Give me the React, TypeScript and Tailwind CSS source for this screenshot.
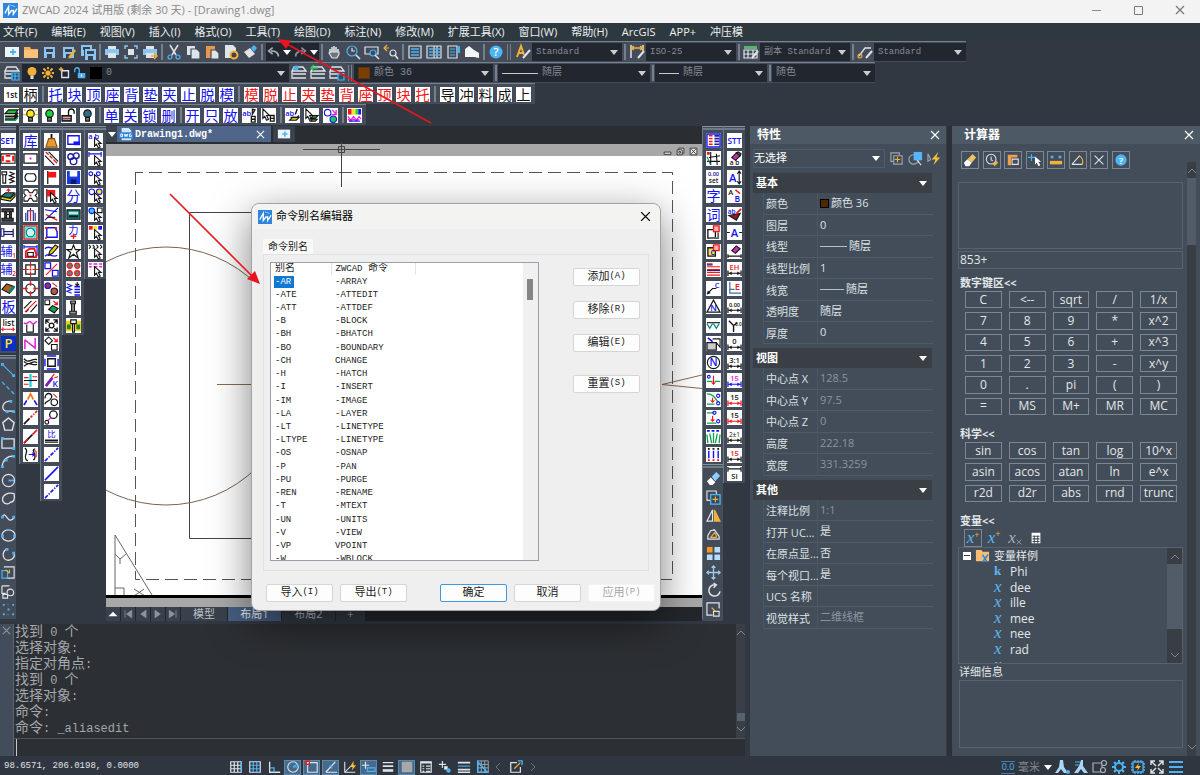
import type { ReactNode } from "react";
import clsx from "clsx";

const SANS = "[font-family:'Open_Sans','Noto_Sans_CJK_SC',sans-serif]";
const MONO = "[font-family:'Liberation_Mono','Noto_Sans_CJK_SC',monospace]";

// d, stroke, fill, stroke width
type Shape = [string, string?, string?, number?];
// text, x, y, size, colour
type Label = [string, number, number, number, string];
type Icon = { name: string; s?: Shape[]; t?: Label[]; bg?: string };

const B = "#1414f0";
const R = "#f01818";
const K = "#151515";
const L = "#dfe4e8";
const S = "#4cb4f5";
const O = "#efb13c";
const G = "#12a04a";
const M = "#e01ee0";
const T = "#0b8080";

const circle = (x: number, y: number, r: number) =>
  `M${x - r} ${y}a${r} ${r} 0 1 0 ${2 * r} 0a${r} ${r} 0 1 0 ${-2 * r} 0z`;

const glyph = (char: string, color = B): Icon => ({ name: char, t: [[char, 8, 13.5, 15, color]] });

const cursor: Shape = ["M7 5v9l2-2 2 4 2-1-2-4h3z", K, "#fff"];

const Drawing = ({ icon, size = "size-[16px]" }: { icon: Icon; size?: string }) => (
  <svg viewBox="0 0 16 16" className={clsx("shrink-0 overflow-visible", size)} aria-hidden="true">
    {icon.s?.map(([d, stroke = "none", fill = "none", width = 1.2], i) => (
      <path key={i} d={d} stroke={stroke} fill={fill} strokeWidth={width} />
    ))}
    {icon.t?.map(([text, x, y, fontSize, fill], i) => (
      <text
        key={i}
        x={x}
        y={y}
        fontSize={fontSize}
        fontWeight={/^[\x20-\x7e]+$/.test(text) ? 600 : 400}
        fill={fill}
        textAnchor="middle"
        className={SANS}
      >
        {text}
      </text>
    ))}
  </svg>
);

const Tile = ({ icon }: { icon: Icon }) => (
  <button
    aria-label={icon.name}
    className={clsx("flex size-[15px] shrink-0 items-center justify-center", icon.bg ?? "bg-white")}
  >
    <Drawing icon={icon} size="size-[15px]" />
  </button>
);

const Tool = ({ icon }: { icon: Icon }) => (
  <button aria-label={icon.name} className="flex w-[19px] shrink-0 items-center justify-center">
    <Drawing icon={icon} />
  </button>
);

const Sep = ({ wide = false }: { wide?: boolean }) => (
  <span className={clsx("flex shrink-0 items-center justify-center self-stretch", wide ? "w-2" : "w-[5px]")}>
    <span className={clsx("h-4 border-[#75808f]", wide ? "w-1 border-x" : "w-0.5 bg-[#75808f]")} />
  </span>
);

const Triangle = ({ className = "fill-[#c9ced3]" }: { className?: string }) => (
  <svg viewBox="0 0 8 5" className={clsx("h-[5px] w-2 shrink-0", className)} aria-hidden="true">
    <path d="M0 0h8l-4 5z" />
  </svg>
);

const Cross = ({ className }: { className: string }) => (
  <svg viewBox="0 0 10 10" className={className} fill="none" strokeWidth="1.2" aria-hidden="true">
    <path d="M1 1l8 8M9 1l-8 8" />
  </svg>
);

type ComboProps = { label: string; value: string; className: string; text?: string; children?: ReactNode };

const Combo = ({ label, value, className, text = "text-[10px]", children }: ComboProps) => (
  <span className={clsx("flex h-[18px] shrink-0 items-center gap-1 bg-[#22262f] px-1", className)}>
    {children}
    <select aria-label={label} className={clsx("min-w-0 flex-1 appearance-none bg-transparent leading-4 text-[#848b94] outline-none", text, MONO)}>
      <option>{value}</option>
    </select>
    <Triangle />
  </span>
);

const logo: Icon = {
  name: "ZWCAD",
  s: [
    ["M0 0h16v16H0z", "none", "#2f84dd"],
    ["M2 11L6 4v8l3-4h2v4l4-6", "#fff", "none", 1.5],
    ["M8 2l5 2", "#9fd0ff", "none", 1],
  ],
};

/* ---------- top toolbars ---------- */
const disk = (x: number, y: number): Shape[] => [
  [`M${x} ${y}h11v11h-11z`, "none", "#8cc5f2"],
  [`M${x + 2} ${y + 2}h7v3h-7z`, "none", "#37424f"],
  [`M${x + 3} ${y + 7}h5v4h-5z`, "none", "#37424f"],
];
const printer: Shape[] = [
  ["M4 2h8v3H4z", "none", L],
  ["M1 5h14v6H1z", "none", "#8cc5f2"],
  ["M4 9h8v5H4z", "none", L],
];
const pages: Shape[] = [
  ["M2 2h8v9H2z", "none", L],
  ["M6 5h6l3 3v7H6z", "#424c58", L],
];

const fileTools: Icon[] = [
  { name: "新建", s: [["M1 3h14v10H1z", "none", "#eef3f7"], ["M9 5v6M6 8h6", S, "none", 1.8]] },
  { name: "打开", s: [["M1 3h6l1 2h7v9H1z", "none", "#f2ae5b"], ["M1 6h14v8H1z", "none", "#ffc27b"]] },
  { name: "保存", s: disk(2, 3) },
  { name: "另存为", s: [...disk(2, 3), ["M8 14l6-8", O, "none", 2.5]] },
  { name: "全部保存", s: [...disk(1, 1), ["M4 5h12v11H4z", "none", "#37424f"], ...disk(5, 5)] },
];
const printTools: Icon[] = [
  { name: "打印", s: printer },
  { name: "预览", s: [["M2 5V2h3M11 2h3v3M14 11v3h-3M5 14H2v-3", "#8cc5f2", "none", 1.5], ["M5 5h6v6H5z", "none", L]] },
  { name: "发布", s: [...printer, ["M9 12h6M12 9l3 3-3 3", O, "none", 1.5]] },
];
const editTools: Icon[] = [
  { name: "剪切", s: [["M4 1l6 10M12 1L6 11", L, "none", 1.5], [circle(4, 13, 2), S], [circle(12, 13, 2), S]] },
  { name: "复制", s: pages },
  { name: "粘贴", s: [["M2 2h9v12H2z", "none", "#e8964a"], ["M7 6h5l3 3v6H7z", "#424c58", L]] },
  { name: "设置", s: [["M2 1h8l3 3v10H2z", "none", L], [circle(11, 11, 3.5), O, "#3b4552", 2]] },
  { name: "特性匹配", s: [["M2 8l6-4 5 6-6 4z", "none", L], ["M9 4l3-3 3 3-3 4z", "none", S]] },
];
const viewTools: Icon[] = [
  { name: "平移", s: [["M4 10V5M6 9V3M8 9V2M10 9V3M12 11V5", L, "none", 1.6], ["M3 9l3 5h5l2-4V8H5z", L, "#6b7580"]] },
  { name: "缩放", s: [[circle(7, 7, 5), S], ["M7 4v3h3", L], ["M11 11l4 4", L, "none", 1.6]] },
  { name: "窗口缩放", s: [["M1 3h13v7H1z", L], [circle(9, 9, 3), S, "#424c58"], ["M11 11l4 4", L, "none", 1.6]] },
  { name: "上一个", s: [["M6 4H1M4 1L1 4l3 3", O], [circle(10, 9, 3), L], ["M12 11l3 4", L, "none", 1.6]] },
];
const panelTools: Icon[] = [
  { name: "特性面板", s: [["M2 2h12v12H2z", L], ["M4 5h8M4 8h8M4 11h8", S, "none", 1.5]] },
  { name: "设计中心", s: [["M1 2h14v12H1zM8 2v12M11 2v12", L], ["M3 5h4M3 8h4M3 11h4M9 5h5M9 8h5M9 11h5", S, "none", 1.3]] },
  { name: "工具选项板", s: [["M3 2h9v12H3z", L], ["M5 5h5M5 8h5M5 11h5", S], ["M12 2h3v7h-3z", "none", S]] },
  { name: "清理", s: [["M1 5l4-3 5 4 5 3v5l-5-1H1z", "none", "#f3f5f7"]] },
];
const help: Icon = { name: "帮助", s: [[circle(8, 8, 6.5), "none", S]], t: [["?", 8, 12, 11, "#fff"]] };
const styleTools: Icon[] = [
  { name: "文字样式", s: [["M2 13L6 2l3 9M4 9h4", O, "none", 2], ["M8 14l7-8", L, "none", 2]] },
  { name: "标注样式", s: [["M2 1v13M14 1v6", L, "none", 1.5], ["M2 4h12M5 2L2 4l3 2M11 2l3 2-3 2", O, "none", 1.5], ["M9 14l6-7", L, "none", 2]] },
  { name: "表格样式", s: [["M1 2h13v3H1z", "none", "#59b36b"], ["M1 6h13v8H1zM1 10h13M5 6v8M10 6v8", L], ["M9 14l6-7", L, "none", 2]] },
  { name: "多重引线样式", s: [["M2 12l6-8h6", L, "none", 1.3], [circle(3, 12, 2), O], ["M9 14l6-7", L, "none", 2]] },
];
const layerShape: Shape[] = [["M3 2h9l3 4H1zM1 6v3h14M1 10v3h14", L, "none", 1.3]];
const layerTool: Icon = { name: "图层特性", s: [...layerShape, ["M8 8h7v7H8z", S, "#29506e"], ["M8 11h7M11 8v7", S]] };
const layerTools: Icon[] = [
  { name: "置为当前", s: [...layerShape, [circle(5, 3, 2.5), "none", S]] },
  { name: "上一图层", s: [...layerShape, ["M8 3H1M4 0L1 3l3 3", "#2fc65f", "none", 1.5]] },
  { name: "图层状态", s: [...layerShape, ["M9 9h6v6H9z", S, "#29506e"]] },
];
const layerState: Icon[] = [
  { name: "开", s: [[circle(8, 6, 6), "none", O], ["M6 12h4v4H6z", "none", L]] },
  { name: "冻结", s: [[circle(8, 8, 3.5), "none", O], ["M8 0v3M8 13v3M0 8h3M13 8h3M2 2l3 3M11 11l3 3M14 2l-3 3M2 14l3-3", O, "none", 2.5]] },
  { name: "视口冻结", s: [["M5 5h9v9H5z", L, "none", 1.8], ["M4 0v6M1 3h6", O, "none", 1.8]] },
  { name: "锁定", s: [["M1 7V4a3 3 0 0 1 6 0v4", S, "none", 1.8], ["M5 8h10v7H5z", "none", S], ["M10 10v3", "#fff", "none", 1.5]] },
];

const bulb = (color: string): Shape[] => [[circle(8, 6, 4), K, color], ["M6 10h4v4H6z", K, "#777"]];
const lightTools: Icon[] = [
  { name: "图层", s: [["M1 6l4-4h10l-3 4z", K, "#19c22a"], ["M1 9h10l4-4M1 12h10l4-4", K, "none", 2], ["M1 13h11l3-3", G, "none", 1.6]] },
  { name: "打开图层", s: [...bulb("#ffe81a"), ["M1 2l2 1M15 2l-2 1M0 7h3M13 7h3", O]] },
  { name: "绿灯", s: bulb("#19d23a") },
  { name: "解锁", s: [["M8 8V4a3 3 0 0 1 6 0v2", K, "none", 1.5], ["M1 8h10v6H1z", K, "#2c2c9e"], ["M2 10h8M2 12h8", O]] },
  { name: "关闭图层", s: bulb("#2b6f80") },
];
const textPick: Icon = { name: "文字选择", s: [["M11 1l3 1-3 5z", K, "#888"], ["M10 9h4v6h-4zM10 12h4", K, "none", 1.4]], t: [["ab", 5, 8, 8, B]] };
const penPick: Icon = { name: "框选", s: [["M2 1v10l2-2 2 4 2-1-2-4h3z", K, "#fff"], ["M10 8h4v6h-4zM10 11h4", K, "none", 1.4]] };
const brushTools: Icon[] = [
  { name: "文字刷", s: [["M6 10h7l2-2", K, "none", 1.4], ["M5 13l3-3h7l-3 3z", K, "#d6c21b"], ["M13 1l-2 6", K, "none", 1.5]], t: [["ab", 5, 8, 8, B]] },
  { name: "图层刷", s: [["M2 1v10l2-2 2 4 2-1-2-4h3z", K, "#fff"], ["M7 11l3-3h5l-3 3z", K, G], ["M7 14l2-2h5l-2 2z", K, "#d6c21b"]] },
  { name: "替换图元", s: [[circle(5, 5, 3.5), B], [circle(11, 12, 3.5), B, "#1fc455"], ["M10 2l4 5M14 2v5h-5", M, "none", 1.4]] },
];
const palette: Icon = {
  name: "颜色",
  s: [
    ["M1 1h4v6H1z", "none", R],
    ["M5 1h4v6H5z", "none", "#ffe81a"],
    ["M9 1h3v6H9z", "none", "#2ad23a"],
    ["M12 1h3v6h-3z", "none", B],
    ["M1 9l3 4 3-4 3 4 3-4 2 3M1 12l3 2 3-2 3 2 3-2", M],
    ["M2 14h12", B],
  ],
};

/* ---------- side toolbars ---------- */
const diag = (color: string, dash: boolean): Icon => ({
  name: "直线",
  s: dash
    ? [["M1 15l3-3M5 11l1-1M7 9l3-3M11 5l1-1M13 3l2-2", color, "none", 1.7]]
    : [["M1 15L15 1", color, "none", 1.7]],
});
const dim = (text: string, color = K, base = K, size = 8): Icon => ({
  name: `标注 ${text}`,
  s: [["M1 9v6M15 9v6M1 12h14", base, "none", 1.3], ["M2 12l3-2v4zM14 12l-3-2v4z", "none", base]],
  t: [[text, 8, 8, size, color]],
});

const sideA: Icon[] = [
  { name: "SET", t: [["SET", 7, 12, 9, B]] },
  { name: "模板", s: [["M0 3h15v10H0z", K], ["M2 5v6M13 5v6M5 5h5M5 11h5", R, "none", 2.2]] },
  { name: "螺钉弹簧", s: [["M1 2h5v3H1zM2 5v9h3V5M9 2l5 2-5 2 5 2-5 2 5 2-5 2", K]] },
  { name: "顶出", s: [["M0 9l5-4h9l-4 6z", K, T], ["M0 9v3l10 2 5-5V6l-5 5z", K, "#e6d41b"], ["M8 7V1M6 3l2-2 2 2", R]] },
  { name: "模座", s: [["M1 2h12v3H1zM4 5h2v7H4zM9 5h2v7H9zM1 12h12v3H1zM6 8h3", K, "#444"]] },
  { name: "导柱", s: [["M0 4h3v8H0zM3 7h10v3H3zM13 4v9", "#1b1b70", "none", 1.3]] },
  { name: "辅1", t: [["辅", 6, 13, 13, B], ["1", 14, 15, 7, R]] },
  { name: "辅2", t: [["辅", 6, 13, 13, B], ["2", 14, 15, 7, R]] },
  { name: "板料", s: [["M1 9l5-6 8 3-5 7z", K, "#a9601c"], ["M9 12l5-6", T, "none", 3]] },
  glyph("板"),
  { name: "列表", s: [["M0 12h15M2 10v4M13 10v4", R]], t: [["list", 8, 8, 9, K]] },
  { name: "P", bg: "bg-[#0b2fc2]", t: [["P", 8, 13, 14, "#ffe81a"]] },
];
const sideDraw: Icon[] = [
  { name: "直线", s: [["M2 3l11 11", S], ["M0 1h3v3H0zM12 13h3v3h-3z", "none", S]] },
  { name: "构造线", s: [["M1 2l3 3M6 7l3 3M11 12l3 3", S, "none", 1.4]] },
  { name: "多段线", s: [["M10 2C0 3 0 13 6 13h8", L, "none", 1.4], ["M9 1h3v3H9zM12 12h3v3h-3zM5 12h3v3H5z", "none", S]] },
  { name: "多边形", s: [["M8 1l6 5-2 8H4L2 6z", L, "none", 1.5]] },
  { name: "矩形", s: [["M1 3h13v10H1z", L, "none", 1.4], ["M0 1h3v3H0zM12 12h3v3h-3z", "none", S]] },
  { name: "圆弧", s: [["M1 14C2 6 7 2 14 2", L, "none", 1.4], ["M0 12h3v3H0zM4 5h3v3H4zM12 1h3v3h-3z", "none", S]] },
  { name: "圆", s: [[circle(8, 8, 6.5), L, "none", 1.3], ["M8 8h6", S, "none", 2]] },
  { name: "修订云线", s: [["M2 11C0 4 8 1 14 3c1 5 0 9-4 9-2 3-6 2-8-1z", L, "none", 1.4]] },
  { name: "样条曲线", s: [["M1 8c4-10 6 10 13 0", L, "none", 1.4], ["M0 6h3v3H0zM12 6h3v3h-3z", "none", S]] },
  { name: "椭圆", s: [["M1 8a7 6 0 1 0 14 0a7 6 0 1 0-14 0", L, "none", 1.4], ["M0 7h3v3H0zM7 1h3v2H7zM13 7h3v3h-3z", "none", S]] },
  { name: "椭圆弧", s: [["M6 2C-1 7 3 15 9 14c4-1 6-4 5-7", L, "none", 1.4], ["M5 1h3v3H5zM12 5h3v3h-3z", "none", S]] },
  { name: "插入块", s: [["M3 2h11v12H6", L], ["M1 6h6v8H1z", S], ["M5 5l4 4M9 5v4", O]] },
  { name: "创建块", s: [["M1 2h8M1 2v8h4", L], [circle(10, 9, 3.5), L], ["M2 11h5v4H2z", L]] },
  { name: "点", s: [["M2 2h2v2H2zM12 2h2v2h-2zM7 7h2v2H7zM2 12h2v2H2zM12 12h2v2h-2zM7 2h1v1H7zM7 13h1v1H7z", "none", S]] },
];
const sideB: Icon[] = [
  glyph("库"),
  { name: "孔", s: [["M1 3h14v10H1z", K, "none", 1.4], ["M7 7h2v2H7z", "none", M]] },
  { name: "腰孔", s: [["M4 4h8q4 4 0 8H4Q0 8 4 4", K, "none", 1.3]] },
  { name: "异形孔", s: [["M1 2h4l2 3h3l2-3h3v4l-2 2 2 2v4h-4l-2-3H7l-2 3H1v-4l2-2-2-2z", K], ["M7 7h2v2H7z", "none", R]] },
  { name: "冲头", s: [["M3 15V6M13 15V6M5 15V4h6v11M8 1v14", "#20208c"], ["M8 3v12", R]] },
  { name: "圆凸", s: [["M1 1h14v14H1z", R, "#5ee8e4", 1.4], [circle(8, 8, 4.5), T, "#c8fffc"]] },
  { name: "倒角", s: [["M1 1v4M1 3h14M15 1v12", B], ["M3 14V8l4-3h5l2 5v4z", R, "none", 2], ["M5 9h6v4H5z", K]] },
  { name: "方孔中心", s: [["M3 3h10v10H3z", K, "none", 1.3], ["M8 0v6M8 10v6M0 8h6M10 8h6", R], ["M7 7h2v2H7z", "none", R]] },
  { name: "圆孔中心", s: [[circle(8, 8, 5), K, "none", 1.3], ["M8 0v5M8 11v5M0 8h5M11 8h5", R, "none", 1.4]] },
  { name: "剖面线", s: [["M1 10l8-8M8 14l7-8M3 14l3-3", K], ["M2 14L14 2", R]] },
  { name: "断面", s: [["M1 5c4 4 5-4 8 0s4-2 6-1", M, "none", 1.5], ["M4 7v8h7V7", K]] },
  { name: "折线", s: [["M2 4v10M2 4l11 9V2", M, "none", 1.6]] },
  { name: "折弯", s: [["M1 4c5 6 8-1 14 1M1 12c6-6 8 0 14-2M1 7c6 6 8-2 14 1", K, "none", 1.4]] },
  { name: "拉伸", s: [["M8 1v14", "#20d4e6", "none", 2.5], ["M1 5h5M10 4h5M10 8h5M1 12h5", R, "none", 1.3], ["M1 8h14", K]] },
  { name: "分叉", s: [["M5 8l3-6 3 6", "#f07818", "none", 1.8], ["M1 14l3-5M15 14l-3-5", B, "none", 1.8]] },
  { name: "延伸", s: [["M1 15l6-6", K, "none", 1.7], ["M8 8l2-2M11 5l1-1M13 3l2-2", R, "none", 1.7]] },
  { name: "打断", s: [["M1 15l9-9", K, "none", 1.7], ["M1 15l4-4M10 6l5-5", R, "none", 1.7]] },
  { name: "翻转", s: [["M2 1c6 4-4 9 3 14M13 2c-6 1 4 7-2 12", K, "none", 1.4], ["M6 8h6M10 6l2 2-2 2", B], ["M12 3l2 2v6", R]] },
];
const sideC: Icon[] = [
  { name: "清扫", s: [["M8 1v5", K, "none", 2], ["M5 6h6l3 9H2z", "#8a4c12", "#e79b2c"]] },
  { name: "平行线", s: [["M1 5l10 10M5 1l10 10", K], ["M2 1l3 3M6 5l3 3M10 9l4 4", R, "none", 1.4]] },
  { name: "标记", s: [["M4 1v14", K, "none", 1.3], ["M4 2h9v6H4z", "none", R]] },
  { name: "选择标记", s: [["M3 1v14", K], ["M3 2h9v7H3z", "none", R], cursor] },
  { name: "修剪", s: [["M1 3l13 2M1 14L15 1", B], ["M2 8l12 6", R], ["M3 11h9", K]] },
  { name: "轮廓", s: [["M3 3h9l2 4v6H3z", B, "none", 1.5], ["M1 3h3M13 2v3M2 13v2", R, "none", 2]] },
  { name: "编辑线", s: [["M1 5c5-5 8 3 13-1M1 13c5-5 8 3 13-1", B, "none", 1.4], ["M5 12l1-4 6-7 3 2-6 7z", K, "#e6d41b"]] },
  { name: "图形比例", s: [["M1 1h6v6H1zM9 9h6v6H9z", B, "none", 1.4], ["M2 14L14 2", R]] },
  { name: "定位", s: [[circle(4, 5, 3), B, "#a33", 1.3], [circle(11, 11, 3.5), K, "#b55"], ["M9 2l5 4", R]] },
  { name: "移动图元", s: [["M1 1h5v5H1z", K], ["M10 2l4 4M14 3v3h-3", R, "none", 1.5], ["M5 11l4-4 6 3-4 5z", K, G]] },
  { name: "阵列孔", s: [[circle(8, 8, 2.5), K, "none", 1.5], ["M2 6V2h4M10 2h4v4M2 10v4h4M14 10v4h-4M2 2l3 3M14 2l-3 3M2 14l3-3M14 14l-3-3", K, "none", 1.5]] },
  { name: "旋转图元", s: [["M1 5l4-4 4 4-4 4z", K], ["M8 9h6v6H8z", K], ["M10 2l4 4M14 3v3h-3", R, "none", 1.5]] },
  { name: "模框", s: [["M4 4h8v8H4z", K, "none", 1.5], ["M3 1h10M3 15h10M1 4v8M15 4v8", B, "none", 1.5]] },
  { name: "魔棒", s: [["M2 14l7-9", "#7a1fb4", "none", 3], ["M8 5l3-4M11 5l4-1", R]], t: [["K", 12, 15, 9, B]] },
  { name: "圆角", s: [["M1 7c0-8 9-6 7-1s-7 3-7 7", K, "none", 1.4], [circle(11, 11, 3.5), K], ["M10 2l4 4", R]] },
  { name: "连接圆", s: [[circle(10, 5, 4), K, "none", 1.4], [circle(3, 13, 2), K], ["M4 11l4-3", M]] },
  { name: "比", s: [["M1 12h14M1 14h14", K, "none", 1.4]], t: [["比", 8, 9, 9, B]] },
  diag(B, true),
  diag(B, false),
  diag(B, true),
];
const sideD: Icon[] = [
  { name: "视口", s: [["M2 3h12v9H2z", B, "none", 1.5], ["M8 9h7v4H8z", "none", B]] },
  { name: "齿轮", s: [[circle(5, 6, 3), "#20209c", "none", 1.5], [circle(11, 5, 3), "#20209c", "none", 1.5], [circle(8, 11, 3.5), "#20209c", "none", 1.5]] },
  { name: "保存", s: [["M1 1h14v14H1z", "none", "#1a3be0"], ["M4 1h8v6H4z", "none", "#fff"], ["M5 10h6v5H5z", "none", "#0b1a70"]] },
  glyph("分"),
  { name: "计算器", s: [["M1 3h14v10H1z", K, T], ["M3 5h10v3H3z", "none", "#bfe4e0"], ["M3 10h10", K, "none", 2]] },
  { name: "力", s: [["M8 9v6M5 12h6", R, "none", 1.4]], t: [["力", 8, 10, 11, B]] },
  { name: "星形", s: [["M8 1l2 5h5l-4 3 2 6-5-4-5 4 2-6-4-3h5z", K]] },
  { name: "四孔", s: [[circle(4, 4, 2.8), R, "#777"], [circle(12, 4, 2.8), R, "#777"], [circle(4, 12, 2.8), R, "#777"], [circle(12, 12, 2.8), R, "#777"]] },
  { name: "弹簧", s: [["M1 3l5 2-5 2 5 2-5 2 5 2", B], ["M9 6h6M9 9h6M9 12h6M9 15h6", B, "none", 1.7], ["M12 1v4M10 3l2 2 2-2", K]] },
  { name: "螺栓", s: [["M5 1h5v3H5zM6 4h3v8H6zM4 12h7v3H4z", K, "#999"]] },
  { name: "装配", s: [["M0 3h16v11H0z", "none", "#e9d61a"], ["M1 7h4v5H1zM11 7h4v5h-4z", "none", "#2a7a2a"], ["M5 2h6v4H5zM7 6h2v9H7z", K, "#e8eef0"]] },
];
const sideE: Icon[] = [
  { name: "文字选择", s: [cursor], t: [["a b", 6, 6, 8, B]] },
  { name: "标注选择", s: [["M1 1v5M14 1v5M1 3h13", B, "none", 1.3], cursor] },
  { name: "同类选择", s: [[circle(3, 4, 2), B], [circle(11, 4, 2), B], cursor] },
  { name: "圆选择", s: [[circle(4, 4, 3), B], [circle(12, 4, 3), B, "#ffe81a"], cursor] },
  { name: "图元选择", s: [[circle(4, 4, 3), B, "#35c7f0"], ["M10 1h5v5h-5z", K], cursor] },
  { name: "颜色选择", s: [["M1 1h4v4H1z", "none", R], ["M6 1h4v4H6z", "none", "#ffe81a"], ["M11 1h4v4h-4z", "none", B], cursor] },
  { name: "填充选择", s: [["M1 1l2 2M5 1l2 2M9 1l2 2M13 1l2 2M1 5l2-2M5 5l2-2M9 5l2-2M13 5l2-2", K], cursor] },
  { name: "线型选择", s: [["M1 2h3M6 2h4M12 2h3M1 5h3M6 5h4M12 5h3", M, "none", 1.6], cursor] },
];
const sideF: Icon[] = [
  { name: "明细表", s: [["M1 1h14v14H1z", B, "#fff", 1.5], ["M3 3h4M3 6h4M3 9h4M3 12h4", R, "none", 1.5], ["M9 3h5M9 6h5M9 9h5M9 12h5", "#20208c", "none", 1.8]] },
  { name: "网格", s: [["M5 1v14M11 3l1 12M3 7l12-2M1 11h14", K], ["M1 1h3v3H1z", "none", R], ["M1 6l4 9", T]] },
  { name: "0.00set", t: [["0.00", 8, 6, 6, "#20208c"], ["set", 8, 14, 7, K]] },
  glyph("字"),
  glyph("词"),
  { name: "图块", s: [["M2 5h8v9H2z", K, "none", 1.4], ["M8 1h6v6H8z", R, "#f8b0b0", 1.4], ["M4 14h9V8", "#666", "none", 2]] },
  { name: "块拷贝", s: [["M2 4h8v9H2z", K, "#f2e04a", 1.4], ["M8 1h6v6H8z", R, "#f8b0b0", 1.4]], t: [["c", 7, 12, 9, B]] },
  { name: "表格", s: [["M1 2h6M1 5h14M1 8h14M1 11h14M1 14h14", R, "none", 1.2], ["M1 3h6M1 9h14", "#20208c"]] },
  { name: "引线", s: [["M1 14l6-6h4", K], ["M1 14l1-4 3 3z", "none", K]], t: [["C", 12, 7, 8, B]] },
  { name: "三角标", s: [["M8 1l7 13H1z", K, "none", 1.3]], t: [["N", 8, 13, 9, B]] },
  { name: "粗糙度", s: [["M1 6l3 5 3-5M8 6l3 5 3-5", T, "none", 1.3], ["M1 5h14", K]] },
  { name: "打印区", s: [["M1 7h10v8H1z", K, "#ccc", 1.3], ["M7 3h8v9l-4-5", K], ["M2 2l5 4", B, "none", 2]] },
  { name: "圆标", s: [[circle(8, 8, 6.5), K]], t: [["N", 8, 12, 11, B]] },
  { name: "端点", s: [["M1 9h6M9 9h6", G, "none", 1.4], [circle(3, 4, 1.5), B], ["M8 3v9M6 10l2 2 2-2", R]] },
  { name: "曲线点", s: [["M1 2c6 0 8 3 12 9M1 13h8", G, "none", 1.4], [circle(13, 4, 1.7), B], [circle(13, 12, 1.7), B], ["M7 6v5M5 9l2 2 2-2", R]] },
  { name: "投影", s: [["M1 3h8M1 14h10", G, "none", 1.4], [circle(9, 3, 1.7), B], [circle(13, 12, 1.7), B], ["M7 6v6M5 10l2 2 2-2", R]] },
  { name: "草图", s: [["M2 15L1 6M6 15L4 5M8 15V4M10 15l2-10M14 15l1-9", G, "none", 1.4], ["M1 2h3M6 2h3M11 2h3", B, "none", 2]] },
  { name: "编号", s: [["M3 4v8M8 4v8M13 4v8", B, "none", 1.5], ["M2 2h2M7 2h2M12 2h2", K, "none", 2], ["M2 14h2M7 14h2M12 14h2", R, "none", 2]] },
];
const sideModify: Icon[] = [
  { name: "删除", s: [["M1 11l4-4 5 5-3 3H4z", "none", "#fff"], ["M6 6l5-5 4 4-5 6z", "none", "#8cccff"]] },
  { name: "复制", s: [["M1 1h10v10H1z", L], ["M5 5h10v10H5z", S, "#3b4a5a", 1.4], ["M10 7v6M7 10h6", O]] },
  { name: "镜像", s: [["M7 2v12H1z", L], ["M9 2v12h6z", O, O]] },
  { name: "偏移", s: [["M2 13h12v-3L9 3 5 4 2 9z", L, "none", 1.3], ["M5 11h6V9L9 6z", O]] },
  { name: "阵列", s: [["M1 1h6v6H1z", "none", "#f79b1d"], ["M9 1h6v6H9zM1 9h6v6H1zM9 9h6v6H9z", "none", "#b9dcff"]] },
  { name: "移动", s: [["M8 1v14M1 8h14M6 3l2-2 2 2M6 13l2 2 2-2M3 6L1 8l2 2M13 6l2 2-2 2", "#9fc9e8", "none", 1.4]] },
  { name: "旋转", s: [["M10 2a6 6 0 1 0 5 7M8 0l3 2-3 3", L, "none", 1.6]] },
  { name: "缩放", s: [["M14 7V1H1v13h6", L, "none", 1.3], ["M8 10h6v5H8z", L], ["M6 6l4 4", O, "none", 1.5]] },
];
const sideG: Icon[] = [
  { name: "STT", t: [["STT", 8, 12, 9, B]] },
  { name: "擦除文字", s: [["M5 7l5-5 4 3-5 5z", K, "#c32fb8"], ["M10 2l2-1 3 2-1 2z", K, "#4a9a2a"]], t: [["a b", 8, 15, 7, K]] },
  { name: "文字高度", s: [["M13 2v12M11 4l2-3 2 3M11 12l2 3 2-3", K]], t: [["A", 6, 13, 12, B]] },
  { name: "替换文字", s: [["M9 2l5 4", R, "none", 1.5]], t: [["A", 4, 7, 8, K], ["B", 11, 15, 9, B]] },
  { name: "文字匹配", s: [["M2 9l8 5 4-7z", K, "#8c1d1d"], ["M10 7l5-5", R, "none", 2]], t: [["ab", 5, 7, 7, B]] },
  { name: "文字宽度", s: [["M0 8h3M13 8h3", K, "none", 1.3]], t: [["A", 8, 13, 12, B]] },
  { name: "擦除标注", s: [["M5 7l5-5 4 3-5 5z", K, "#c32fb8"], ["M1 11v4M15 11v4M1 13h14", K, "none", 1.3]] },
  dim("EH", R),
  { name: "坐标标注", s: [["M3 1v12h12M3 9h5", "#3b6ea5", "none", 1.3]], t: [["E", 11, 10, 10, R]] },
  dim("0.00", K, K, 6),
  { name: "角标", s: [["M2 3l5 5v7M7 8l4-3", K, "none", 1.5]], t: [["0.0", 12, 8, 5, K]] },
  dim("0"),
  dim("3:1"),
  dim("15", M, B),
  dim("15", K, R),
  dim("15", K, R),
  dim("2±1", K, K, 7),
  dim("15", R),
  { name: "IS", s: [["M1 1v5M15 1v5M1 3h14", K, "none", 1.3]], t: [["SI", 8, 14, 8, K]] },
];

const Grip = () => <div className="h-[5px] shrink-0 border-t border-[#8593a3] py-px"><div className="h-0.5 bg-[#6e7a88]" /></div>;

const IconColumn = ({ icons, height, width, flat = false }: { icons: Icon[]; height: string; width: string; flat?: boolean }) => (
  <div className={clsx("shrink-0 self-start border-l border-[#6c7988] bg-[#434c58]", width)}>
    <Grip />
    <div className={clsx("flex flex-col items-center justify-around", height)}>
      {icons.map((icon, i) => (
        <Tile key={i} icon={flat ? { ...icon, bg: "bg-transparent" } : icon} />
      ))}
    </div>
  </div>
);

/* ---------- header ---------- */
const menus = ["文件(F)", "编辑(E)", "视图(V)", "插入(I)", "格式(O)", "工具(T)", "绘图(D)", "标注(N)", "修改(M)", "扩展工具(X)", "窗口(W)", "帮助(H)", "ArcGIS", "APP+", "冲压模"];

const tools = (icons: Icon[]) => icons.map((icon) => <Tool key={icon.name} icon={icon} />);
const tiles = (icons: Icon[]) =>
  icons.map((icon, i) => (
    <span key={i} className="flex w-[19px] shrink-0 justify-center">
      <Tile icon={icon} />
    </span>
  ));
const chars = (text: string, color: string) => tiles([...text].map((char) => glyph(char, color)));

const barRow = "flex h-[21px] items-center self-start border-t border-[#75818f] bg-[#434c58] pl-0.5";

const Header = () => (
  <header>
    <div className="flex h-[23px] items-center bg-[#f3f3f3] pb-[3px] pl-[3px]">
      <Drawing icon={logo} size="size-[15px]" />
      <h1 className="ml-1 flex-1 text-[11px] text-[#898989]">ZWCAD 2024 试用版 (剩余 30 天) - [Drawing1.dwg]</h1>
      <button aria-label="最小化" className="flex w-10 justify-center"><span className="h-px w-[9px] bg-[#8c8c8c]" /></button>
      <button aria-label="最大化" className="flex w-11 justify-center"><span className="size-[9px] rounded-[1px] border border-[#777]" /></button>
      <button aria-label="关闭" className="flex w-10 justify-center"><Cross className="size-[10px] stroke-[#777]" /></button>
    </div>
    <nav className="flex h-[18px] items-center gap-[14px] bg-[#2d383f] px-[3px] text-[11px] text-[#edf0f2]">
      {menus.map((menu) => (
        <a key={menu} href="#" className="whitespace-nowrap">{menu}</a>
      ))}
    </nav>
    <div className="flex flex-col bg-[#323842]">
      <div className={barRow}>
        {tools(fileTools)}<Sep />{tools(printTools)}<Sep />{tools(editTools)}<Sep />
        <span className="ml-0.5 flex h-[18px] w-[53px] items-center justify-around bg-[#22262f]">
          <Drawing icon={{ name: "放弃", s: [["M14 13c0-6-4-7-9-7M7 2L2 6l5 4", "#a9b0b7", "none", 2]] }} size="size-[13px]" />
          <Triangle className="fill-white" />
          <Drawing icon={{ name: "重做", s: [["M2 13c0-6 4-7 9-7M9 2l5 4-5 4", "#8b939c", "none", 2]] }} size="size-[13px]" />
          <Triangle className="fill-white" />
        </span>
        <Sep />{tools(viewTools)}<Sep />{tools(panelTools)}<Sep /><Tool icon={help} /><Sep wide />
        <Tool icon={styleTools[0]} />
        <Combo label="文字样式" value="Standard" text="text-[9px]" className="w-[90px]" /><Sep />
        <Tool icon={styleTools[1]} />
        <Combo label="标注样式" value="ISO-25" text="text-[9px]" className="w-[90px]" /><Sep />
        <Tool icon={styleTools[2]} />
        <Combo label="表格样式" value="副本 Standard" text="text-[9px]" className="w-[90px]" /><Sep />
        <Tool icon={styleTools[3]} />
        <Combo label="引线样式" value="Standard" text="text-[9px]" className="w-[92px]" />
      </div>
      <div className={barRow}>
        <Tool icon={layerTool} />
        <Combo label="图层" value="0" className="ml-px w-[267px]">
          {layerState.map((icon) => <Drawing key={icon.name} icon={icon} size="size-[12px]" />)}
          <span className="size-3 bg-black" />
        </Combo>
        {tools(layerTools)}<Sep wide />
        <Combo label="颜色" value="颜色 36" className="w-[139px]"><span className="size-3 border border-[#5a3313] bg-[#7b3f00]" /></Combo><Sep />
        <Combo label="线型" value="随层" className="w-[152px]"><span className="h-px w-9 bg-[#c4c9ce]" /></Combo><Sep />
        <Combo label="线宽" value="随层" className="w-[112px]"><span className="h-px w-5 bg-[#c4c9ce]" /></Combo><Sep />
        <Combo label="打印样式" value="随色" className="w-[103px]" />
      </div>
      <div className={clsx(barRow, "pr-0.5")}>
        {tiles([{ name: "1st", t: [["1st", 8, 12, 9, K]] }, glyph("柄", K)])}<Sep />
        <span className="ml-px flex">{chars("托块顶座背垫夹止脱模", B)}</span><Sep />
        <span className="ml-px flex">{chars("模脱止夹垫背座顶块托", R)}</span><Sep />
        <span className="ml-px flex">{chars("导冲料成上", K)}</span>
      </div>
      <div className={clsx(barRow, "pr-0.5")}>
        {tiles(lightTools)}<Sep />
        {chars("单关锁删", B)}<Sep />
        {chars("开只放", B)}{tiles([textPick, penPick])}<Sep />
        {tiles(brushTools)}<Sep />
        {tiles([palette])}
      </div>
      <div className="h-px" />
    </div>
  </header>
);

/* ---------- drawing area ---------- */
const Canvas = () => (
  <div className="flex min-w-0 flex-1 flex-col">
    <div className="flex h-[18px] items-stretch bg-[#2a2e32] pb-0.5">
      <button aria-label="文档列表" className="flex w-[11px] items-center justify-center bg-[#3b434e]"><Triangle className="fill-white" /></button>
      <div className="flex w-[154px] items-center bg-[#50658a] px-0.5">
        <svg viewBox="0 0 16 16" className="size-[14px]" aria-hidden="true">
          <path d="M3 1h8l3 3v11H3z" fill="#cfe6fb" />
          <path d="M0 6h16v7H0z" fill="#2f84dd" />
          <path d="M2 11V8h2v3zM6 8l1 3 1-3 1 3 1-3M14 8h-2v3h2V9" fill="none" stroke="#fff" />
        </svg>
        <span className={clsx("ml-0.5 flex-1 text-[10px] font-bold text-white", MONO)}>Drawing1.dwg*</span>
        <button aria-label="关闭文档" className="p-1"><Cross className="size-[9px] stroke-white" /></button>
      </div>
      <button aria-label="新建文档" className="ml-0.5 flex w-[22px] items-center justify-center bg-[#39424e]">
        <Drawing icon={fileTools[0]} size="size-[14px]" />
      </button>
    </div>
    <div className="flex h-3 items-end justify-end gap-1 bg-[#a8a8a8] pr-1">
      {["M2 9h12v4H2z", "M2 5h9v9H2zM5 5V2h9v9h-3M5 8h3v3H5z", "M2 2h12v12H2zM4 4l8 8M12 4l-8 8"].map((d) => (
        <svg key={d} viewBox="0 0 16 16" className="size-[9px]" fill="#e6e6e6" stroke="#333" strokeWidth="1.6" aria-hidden="true"><path d={d} /></svg>
      ))}
    </div>
    <div className="relative flex-1 border-b-[3px] border-black bg-white">
      <svg className="absolute inset-x-0 -top-3 h-[451px] w-full" fill="none" stroke="#444" aria-hidden="true">
        <path d="M29.5 28V435.5H566.5V28.5H29.5" stroke="#555" strokeDasharray="13 6" />
        <path d="M83.5 394.5V68.5H300M83.5 394.5H300" />
        <circle cx="60" cy="232" r="129" stroke="#7d6350" />
        <path d="M111 240.5H260M596 231l-40 9.5 40 4" stroke="#8a6a50" />
        <path d="M9 391v60M9 391l37 60M9 444h9v7M9 410l5 5 6-5M14 415v5M28 445l11 7M38 445l-10 7" stroke="#666" />
      </svg>
      <svg className="absolute -top-[14px] left-[196px] h-[46px] w-20" fill="none" stroke="#444" aria-hidden="true">
        <path d="M1 7.5h77M39.5 0v45M36.500 4.500h6v6h-6z" />
      </svg>
    </div>
    <div className="h-[9px] bg-[#a8a8a8]" />
    <div className="flex h-[14px] items-stretch gap-px bg-[#23272b] text-[11px] leading-[14px] text-[#b7bec5]">
      {["M8 5l6 6H2z", "M4 3v10M13 3v10L6 8z", "M12 3v10L5 8z", "M4 3v10l7-5z", "M3 3v10l7-5zM12 3v10"].map((d, i) => (
        <button key={d} aria-label={`布局导航 ${i + 1}`} className="flex w-[14px] items-center justify-center bg-[#39414c]">
          <svg viewBox="0 0 16 16" className="size-3" fill={i ? "#8c959f" : "#fff"} stroke={i ? "#8c959f" : "none"} aria-hidden="true"><path d={d} /></svg>
        </button>
      ))}
      <button className="w-[46px] bg-[#39414c]">模型</button>
      <button className="w-[53px] bg-[#465e80] text-[#e6eaee]">布局1</button>
      <button className="w-[53px] bg-[#333a43]">布局2</button>
      <button className="w-[29px] bg-[#333a43]">+</button>
    </div>
  </div>
);

const MixedText = ({ text, latin, cjk }: { text: string; latin: string; cjk: string }) => (
  <>
    {text.split(/([\x20-\x7e]+)/).filter(Boolean).map((part, i) => (
      <span key={i} className={/^[\x20-\x7e]/.test(part) ? latin : cjk}>{part}</span>
    ))}
  </>
);

const history = ["找到 0 个", "选择对象:", "指定对角点:", "找到 0 个", "选择对象:", "命令:", "命令: _aliasedit"];

const Chevron = ({ up = false }: { up?: boolean }) => (
  <svg viewBox="0 0 8 5" className={clsx("h-[5px] w-2 shrink-0", up && "rotate-180")} fill="none" stroke="#7d8791" aria-hidden="true">
    <path d="M0 0l4 4 4-4" />
  </svg>
);

const CommandLine = () => (
  <section className="flex h-[132px] bg-[#2c2f33]">
    <div className="w-[14px] border-r border-[#5a6672] bg-[#434c5a] pt-0.5">
      <button aria-label="关闭命令行" className="block px-0.5"><Cross className="size-[9px] stroke-[#8c949d]" /></button>
    </div>
    <div className="flex min-w-0 flex-1 flex-col">
      <div className="flex flex-1 border-b border-[#4c5761]">
        <div className={clsx("flex-1 pl-px text-[#a3a8ad]", MONO)}>
          {history.map((line, i) => (
            <p key={i} className="h-4 whitespace-pre leading-4">
              <MixedText text={line} latin="text-[12px]" cjk="text-[14px]" />
            </p>
          ))}
        </div>
        <div className="flex w-[9px] flex-col items-center justify-between bg-[#3a3e46] py-1.5">
          <Chevron up />
          <span className="mt-auto mb-1.5 h-2 w-2 bg-[#56616d]" />
          <Chevron />
        </div>
      </div>
      <input aria-label="命令" className="ml-0.5 h-[17px] border-l border-[#c5c9cd] bg-transparent text-[12px] text-[#a3a8ad] outline-none" />
    </div>
  </section>
);

/* ---------- properties ---------- */
const groups: { title: string; height: string; dim: boolean; rows: [string, string, boolean?][] }[] = [
  {
    title: "基本",
    height: "h-[151px]",
    dim: false,
    rows: [["颜色", "颜色 36"], ["图层", "0"], ["线型", "随层"], ["线型比例", "1"], ["线宽", "随层"], ["透明度", "随层"], ["厚度", "0"]],
  },
  {
    title: "视图",
    height: "h-[108px]",
    dim: true,
    rows: [["中心点 X", "128.5"], ["中心点 Y", "97.5"], ["中心点 Z", "0"], ["高度", "222.18"], ["宽度", "331.3259"]],
  },
  {
    title: "其他",
    height: "h-[129px]",
    dim: false,
    rows: [["注释比例", "1:1", true], ["打开 UC...", "是"], ["在原点显...", "否"], ["每个视口...", "是"], ["UCS 名称", ""], ["视觉样式", "二维线框", true]],
  },
];

const PanelTitle = ({ title, className }: { title: string; className?: string }) => (
  <div className={clsx("flex h-[18px] shrink-0 items-center bg-[#4d5a66] pr-1.5 text-[12px] text-white", className)}>
    <h2 className="flex-1 font-bold">{title}</h2>
    <button aria-label={`关闭${title}`}><Cross className="size-[10px] stroke-white" /></button>
  </div>
);

const Properties = () => (
  <aside className="w-[197px] shrink-0 border-r border-[#363d46] bg-[#434d59] text-[11px] text-[#dde1e5]">
    <PanelTitle title="特性" className="pl-[7px]" />
    <div className="mt-[5px] mb-[5px] flex items-center gap-1 px-[3px]">
      <span className="flex h-[19px] w-[132px] items-center border border-[#505b66] pr-1">
        <select aria-label="选择" className="flex-1 appearance-none bg-transparent text-white outline-none"><option>无选择</option></select>
        <Triangle className="fill-white" />
      </span>
      <button aria-label="快速选择"><Drawing icon={{ name: "", s: [["M2 2h9v9H2z", "#9aa4ae"], ["M5 5h9v9H5z", "#9aa4ae", "#434d59"], ["M9 6v6M6 9h6", O]] }} size="size-[15px]" /></button>
      <button aria-label="选择对象"><Drawing icon={{ name: "", s: [[circle(6, 9, 5), "#9aa4ae"], ["M6 1h9v9H6z", "none", "#58b5f8"], ["M10 10l4 5", L]] }} size="size-[15px]" /></button>
      <button aria-label="切换"><Drawing icon={{ name: "", s: [["M1 3v8l3-2z", "#9aa4ae"], ["M12 1L5 9h4l-2 6 7-8h-4z", "none", "#f5c13c"]] }} size="size-[15px]" /></button>
    </div>
    {groups.map((group) => (
      <section key={group.title} className="mr-[14px] mb-1 ml-[3px]">
        <button className="flex h-5 w-full items-center justify-between bg-[#3a3f45] pr-[5px] pl-[3px] font-bold text-white">
          {group.title}<Triangle className="fill-white" />
        </button>
        <table className={clsx("ml-2.5 w-[170px] table-fixed", group.height)}>
          <tbody>
            {group.rows.map(([name, value, muted]) => (
              <tr key={name} className="border-b border-[#505b66]">
                <th scope="row" className="w-[54px] border-x border-[#4b5662] p-0 pt-0.5 pl-0.5 text-left leading-4 font-normal whitespace-nowrap">{name}</th>
                <td className={clsx("p-0 pl-0.5", group.dim || muted ? "text-[#8b949e]" : "text-[#dde1e5]")}>
                  <span className="flex h-4 items-center">
                    {name === "颜色" && <span className="mr-0.5 size-[9px] border border-black bg-[#4f2800]" />}
                    {name === "线型" && <span className="mr-0.5 h-px w-[27px] bg-[#b8bec5]" />}
                    {name === "线宽" && <span className="mr-0.5 h-px w-6 bg-[#b8bec5]" />}
                    {value}
                  </span>
                </td>
              </tr>
            ))}
          </tbody>
        </table>
      </section>
    ))}
  </aside>
);

/* ---------- calculator ---------- */
const keypad = ["C", "<--", "sqrt", "/", "1/x", "7", "8", "9", "*", "x^2", "4", "5", "6", "+", "x^3", "1", "2", "3", "-", "x^y", "0", ".", "pi", "(", ")", "=", "MS", "M+", "MR", "MC"];
const science = ["sin", "cos", "tan", "log", "10^x", "asin", "acos", "atan", "ln", "e^x", "r2d", "d2r", "abs", "rnd", "trunc"];
const variables = ["Phi", "dee", "ille", "mee", "nee", "rad", "vee"];

const calcTools: Icon[] = [
  { name: "清除", s: [["M1 11l4-4 5 4-3 4H3z", "none", "#fff"], ["M5 7l6-6 4 4-5 6z", "none", "#eec169"]] },
  { name: "清除历史", s: [[circle(7, 7, 5.5), L], ["M7 4v4l2 1", L], ["M10 14l4-4", O, "none", 3]] },
  { name: "粘贴", s: [["M2 2h11v3H6v9H2z", "none", "#eda04e"], ["M7 7h7v6H7z", L]] },
  { name: "获取坐标", s: [["M4 1v8M0 5h8", S], ["M8 4v9l2-2 2 4 2-1-2-4h3z", "none", "#fff"]] },
  { name: "距离", s: [["M2 3h3v3H2zM11 3h3v3h-3z", "none", S], ["M1 11h14", O, "none", 4]] },
  { name: "角度", s: [["M1 13L10 3M1 13h12", L], ["M9 3c4 2 5 6 4 10", O]] },
  { name: "交点", s: [["M3 3l10 10M13 3L3 13", L, "none", 1.3]] },
  help,
];

const KeyGrid = ({ labels, className }: { labels: string[]; className: string }) => (
  <div className={clsx("ml-[13px] grid w-[212px] auto-rows-fr grid-cols-5 gap-x-[7px] gap-y-1", className)}>
    {labels.map((label) => (
      <button key={label} className="flex items-center justify-center border border-[#7d8791] text-[12px] leading-none">{label}</button>
    ))}
  </div>
);

const XMark = ({ className = "text-[#5db6f5]" }: { className?: string }) => (
  <span className={clsx("[font-family:'Liberation_Serif',serif] text-[17px] leading-3 italic", className)}>x</span>
);

const Calculator = () => (
  <aside className="flex w-[248px] shrink-0 flex-col bg-[#434d59] text-[11px] text-[#e4e7ea]">
    <PanelTitle title="计算器" className="pl-3" />
    <div className="flex min-h-0 flex-1">
      <div className="flex w-[235px] flex-col">
        <div className="mt-[7px] ml-[9px] flex w-[169px] justify-between">
          {calcTools.map((icon) => (
            <button key={icon.name} aria-label={icon.name} className="flex size-[18px] items-center justify-center border border-[#7d8791]">
              <Drawing icon={icon} size="size-[14px]" />
            </button>
          ))}
        </div>
        <div className="mt-[13px] ml-1.5 h-[67px] w-[225px] border border-[#59626b]" />
        <input aria-label="表达式" defaultValue="853+" className="mt-0.5 ml-1.5 h-[18px] w-[225px] border border-[#59626b] bg-transparent px-px text-[12px] outline-none" />
        <h3 className="mt-[5px] ml-2 h-[17px] leading-[17px] font-bold">数字键区&lt;&lt;</h3>
        <KeyGrid labels={keypad} className="h-[124px]" />
        <h3 className="mt-2.5 ml-2 h-[17px] leading-[17px] font-bold">科学&lt;&lt;</h3>
        <KeyGrid labels={science} className="h-[60px]" />
        <h3 className="mt-2.5 ml-2 h-[17px] leading-[17px] font-bold">变量&lt;&lt;</h3>
        <div className="ml-3 flex h-[18px] items-center gap-[3px]">
          <button aria-label="新建变量" className="flex size-[18px] items-center justify-center border border-[#7d8791]"><XMark /><span className="self-start text-[9px] leading-none text-[#efb13c]">+</span></button>
          <button aria-label="编辑变量" className="flex size-[18px] items-center justify-center"><XMark /><span className="self-start text-[9px] leading-none text-[#efb13c]">+</span></button>
          <button aria-label="删除变量" className="flex size-[18px] items-center justify-center"><XMark className="text-[#a9b0b7]" /><Cross className="mb-0.5 size-[6px] self-end stroke-[#a9b0b7]" /></button>
          <button aria-label="返回变量" className="flex size-[18px] items-center justify-center"><Drawing icon={{ name: "", s: [["M3 2h10v12H3z", "none", "#fff"], ["M4 6h8M4 9h8M4 12h8M6 5v9M10 5v9", "#434d59"]] }} size="size-[14px]" /></button>
        </div>
        <div className="ml-1.5 flex h-[117px] w-[225px] overflow-hidden border border-[#59626b]">
          <ul className="grid h-[125px] flex-1 auto-rows-fr text-[12px] leading-[15px]">
            <li className="flex items-center text-[11px]">
              <button aria-label="折叠" className="ml-1 flex size-2 items-center justify-center bg-white"><span className="h-px w-1.5 bg-[#3a3f45]" /></button>
              <Drawing icon={{ name: "", s: [["M1 2h6l1 2h7v10H1z", "none", "#f8bd72"], ["M8 7l5 8M14 7l-6 8", "#2f84dd", "none", 1.6]] }} size="mx-1 size-[15px]" />
              变量样例
            </li>
            {variables.map((name, i) => (
              <li key={name} className="flex items-center pl-[35px]">
                <span className="w-4 leading-3">{i === 0 ? <span className="[font-family:'Liberation_Serif',serif] text-[13px] font-bold text-[#5db6f5]">k</span> : <XMark />}</span>
                {name}
              </li>
            ))}
          </ul>
          <div className="flex w-[15px] flex-col items-center bg-[#393d44]">
            <span className="flex h-4 items-center"><Chevron up /></span>
            <span className="h-[65px] w-full bg-[#525c68]" />
            <span className="mt-auto flex h-4 items-center"><Chevron /></span>
          </div>
        </div>
        <h3 className="ml-[7px] h-4 leading-[15px]">详细信息</h3>
        <div className="mb-2 ml-[7px] w-[224px] flex-1 border border-[#59626b]" />
      </div>
      <div className="mt-[18px] flex w-[9px] flex-col items-center bg-[#393d44]">
        <span className="flex h-4 items-center"><Chevron up /></span>
        <span className="h-[67px] w-full bg-[#525c68]" />
        <span className="mt-auto mb-1.5"><Chevron /></span>
      </div>
    </div>
  </aside>
);

/* ---------- status bar ---------- */
const statusIcons: (Icon & { on?: boolean })[] = [
  { name: "捕捉", s: [["M2 2h12v12H2zM2 6h12M2 10h12M6 2v12M10 2v12", L, "none", 1.4], ["M14 2v12", S]] },
  { name: "栅格", s: [["M2 2h12v12H2z", L, "none", 1.4], ["M2 6h12M2 10h12M6 2v12M10 2v12", S, "none", 1.4]] },
  { name: "正交", s: [["M3 2v12h12", L, "none", 1.5], ["M3 9h5v5", S, "none", 1.5]] },
  { name: "极轴", on: true, s: [[circle(8, 8, 6), L, "none", 1.3], ["M8 8l6-4M8 8h6", S, "none", 1.3]] },
  { name: "对象捕捉", on: true, s: [["M3 3h11v11H3z", L, "none", 1.3], ["M1 1h4v4H1z", R]] },
  { name: "对象追踪", on: true, s: [["M2 14h13M2 14L13 2", L, "none", 1.3], ["M6 7h3v3", S]] },
  { name: "动态UCS", s: [["M2 2v12h12M2 14l7-7", L, "none", 1.2], ["M12 1L8 8h3l-1 4 5-6h-3z", "none", "#f5c13c"]] },
  { name: "动态输入", on: true, s: [["M4 2v8M0 6h8", L, "none", 1.4], ["M6 9h9v4H6z", S, "none", 1.3]] },
  { name: "线宽", s: [["M2 3h12", L, "none", 1.4], ["M2 7h12", L, "none", 2], ["M2 12h12", L, "none", 3]] },
  { name: "透明度", on: true, s: [["M2 2h12v12H2z", "none", "#a8a8a8"]] },
  { name: "快捷特性", s: [["M2 2h12v12H2z", L, "none", 1.3], ["M2 3h12", L, "none", 2], ["M4 7h2M8 7h5M4 10h2M8 10h5M4 13h2M8 13h5", L]] },
  { name: "循环选择", s: [["M5 1v8M1 5h8", L, "none", 1.3], ["M7 7h4v4H7z", "none", L], [circle(12, 12, 2.5), "none", S]] },
  { name: "注释监视", s: [["M1 3h14M1 11h14M1 14h14", L, "none", 1.8], ["M1 7h14", S]] },
  { name: "模型空间", s: [["M2 1h12v13H2zM2 5h12M2 9h12M6 1v13M10 1v13", "#a9b0b7", "none", 1], ["M2 2l11 12H2z", S, "none", 1.8]] },
];
const statusRight: Icon[] = [
  { name: "注释比例", s: [["M6 1h3l1 7 4 6h-4L7 10l-3 4H1l4-6z", "none", "#a9d6f5"], [circle(14, 13, 2), "none", S]] },
  { name: "自动缩放", s: [["M8 1h2v6l5 7h-4L8 10l-3 4H1l5-7z", "none", "#a9d6f5"], ["M2 3h5M2 6h4", S]] },
  { name: "工作空间", s: [["M1 4h9v9H1z", "#a9b0b7"], [circle(12, 4, 2.5), "#a9b0b7", "#2f3640"], [circle(11, 11, 2.5), "#a9b0b7", "#2f3640"]] },
  { name: "设置", s: [[circle(8, 8, 4), S, "none", 2], ["M8 1v3M8 12v3M1 8h3M12 8h3M3 3l2 2M11 11l2 2M13 3l-2 2M3 13l2-2", S, "none", 2]] },
  { name: "硬件加速", s: [["M3 3h10v10H3zM5 1v2M8 1v2M11 1v2M5 13v2M8 13v2M11 13v2M1 5h2M1 8h2M1 11h2M13 5h2M13 8h2M13 11h2", S, "none", 1.3], ["M9 4L5 9h3l-1 3 4-5H8z", "none", "#f5c13c"]] },
  { name: "全屏", s: [["M2 6V2h4M10 2h4v4M14 10v4h-4M6 14H2v-4M2 2l5 5M14 2L9 7M14 14L9 9M2 14l5-5", L, "none", 1.4]] },
  { name: "自定义", s: [["M1 3h14M1 8h14M1 13h14", S, "none", 2]] },
];

const StatusBar = () => (
  <footer className="flex h-[19px] items-center bg-[#2f3640] pt-[3px]">
    <p className={clsx("w-[226px] whitespace-pre pl-1 text-[9px] text-[#e0e4e8]", MONO)}>98.6571, 206.0198, 0.0000</p>
    {statusIcons.map((icon) => (
      <button key={icon.name} aria-label={icon.name} className="flex w-[19px] shrink-0 justify-center">
        <span className={clsx("flex h-[15px] w-[17px] items-center justify-center", icon.on && "border border-[#5f88ad] bg-[#466a8c]")}>
          <Drawing icon={icon} size="size-[14px]" />
        </span>
      </button>
    ))}
    <div className="flex items-center gap-2 pl-1">
      <svg viewBox="0 0 5 8" className="h-2 w-[5px]" fill="none" stroke="#68727d" aria-hidden="true"><path d="M4 0L0 4l4 4" /></svg>
      <Drawing icon={{ name: "", s: [["M9 3H2v11h11V8", L, "none", 1.4], ["M10 1h5v5", S, "none", 1.5], ["M6 10l7-7", O, "none", 1.5]] }} size="size-[14px]" />
      <svg viewBox="0 0 5 8" className="h-2 w-[5px]" fill="none" stroke="#68727d" aria-hidden="true"><path d="M0 0l4 4-4 4" /></svg>
    </div>
    <div className="ml-auto flex items-center pr-[15px]">
      <span className="mr-[3px] flex h-[13px] w-[14px] items-center justify-center border-y border-[#3f7fb0] text-[9px] text-[#4cb4f5]">0.0</span>
      <span className="mr-1 text-[11px] leading-3 text-[#7f8891]">毫米</span>
      <Triangle className="fill-white" />
      {tools(statusRight)}
    </div>
  </footer>
);

/* ---------- alias dialog ---------- */
const aliases = [
  ["-AR", "-ARRAY"], ["-ATE", "-ATTEDIT"], ["-ATT", "-ATTDEF"], ["-B", "-BLOCK"], ["-BH", "-BHATCH"], ["-BO", "-BOUNDARY"],
  ["-CH", "CHANGE"], ["-H", "-HATCH"], ["-I", "-INSERT"], ["-IM", "-IMAGE"], ["-LA", "-LAYER"], ["-LT", "-LINETYPE"],
  ["-LTYPE", "-LINETYPE"], ["-OS", "-OSNAP"], ["-P", "-PAN"], ["-PU", "-PURGE"], ["-REN", "-RENAME"], ["-T", "-MTEXT"],
  ["-UN", "-UNITS"], ["-V", "-VIEW"], ["-VP", "VPOINT"], ["-W", "-WBLOCK"],
];

const DialogButton = ({ label, tone = "border-[#d5d5d5] text-[#222]" }: { label: string; tone?: string }) => (
  <button className={clsx("flex h-[18px] w-[67px] items-center justify-center rounded-xs border bg-[#fdfdfd]", MONO, tone)}>
    <MixedText text={label} latin="text-[9px]" cjk="text-[11px]" />
  </button>
);

const AliasDialog = () => (
  <div role="dialog" aria-labelledby="alias-title" className="absolute top-[203px] left-[251px] w-[410px] rounded-lg border border-[#a3a3a3] bg-[#efefef] text-[#1c1c1c] shadow-[0_12px_40px_rgba(0,0,0,0.5)]">
    <div className="flex h-[25px] items-center rounded-t-lg bg-[#f3f3f1] pr-2 pl-1.5">
      <Drawing icon={logo} size="size-[14px]" />
      <h2 id="alias-title" className="ml-1 flex-1 text-[11px] text-black">命令别名编辑器</h2>
      <button aria-label="关闭" className="p-px"><Cross className="size-[11px] stroke-black" /></button>
    </div>
    <div className="px-[11px] pt-[10px]">
      <div role="tab" className="h-[15px] w-[50px] bg-[#f9f9f9] text-center text-[10px] leading-[15px]">命令别名</div>
      <div className="flex h-[317px] justify-between border border-[#e2e2e2] pt-[7px] pr-2 pl-1.5">
        <div className="flex h-[299px] w-[269px] overflow-hidden border border-[#9aa0ab] bg-white">
          <div className={clsx("flex-1", MONO)}>
            <table className="h-[303px] w-full text-[9px] leading-3">
              <thead>
                <tr className="text-left">
                  <th className="w-[60px] border-r border-[#e5e5e5] p-0 pl-1 text-[10px] font-normal">别名</th>
                  <th className="w-[84px] border-r border-[#e5e5e5] p-0 pl-1 text-[10px] font-normal"><MixedText text="ZWCAD 命令" latin="whitespace-pre text-[9px]" cjk="text-[10px]" /></th>
                  <th className="p-0" aria-label="空" />
                </tr>
              </thead>
              <tbody>
                {aliases.map(([alias, command], i) => (
                  <tr key={alias}>
                    <td className="p-0 pl-[3px]"><span className={clsx("inline-block px-px", i === 0 && "bg-[#0f78d4] pr-[3px] text-white")}>{alias}</span></td>
                    <td className="p-0 pl-1">{command}</td>
                    <td className="p-0" />
                  </tr>
                ))}
              </tbody>
            </table>
          </div>
          <div className="w-[15px] bg-[#f0f0f0] pt-4 pl-1"><div className="h-[21px] w-[6px] bg-[#858585]" /></div>
        </div>
        <div className="flex flex-col gap-[15px] pt-1.5">
          <DialogButton label="添加(A)" />
          <DialogButton label="移除(R)" />
          <DialogButton label="编辑(E)" />
          <div className="mt-2"><DialogButton label="重置(S)" /></div>
        </div>
      </div>
    </div>
    <div className="flex gap-[7px] pt-[13px] pr-[5px] pb-2 pl-[14px]">
      <DialogButton label="导入(I)" />
      <DialogButton label="导出(T)" />
      <div className="ml-auto flex gap-[7px]">
        <DialogButton label="确定" tone="border-[#3f97e0] text-[#222]" />
        <DialogButton label="取消" />
        <DialogButton label="应用(P)" tone="border-[#f3f3f3] text-[#a5a5a5]" />
      </div>
    </div>
  </div>
);

export default function App() {
  return (
    <div className={clsx("relative flex min-h-screen flex-col overflow-hidden bg-[#323842]", SANS)}>
      <Header />
      <main className="flex flex-1">
        <div className="flex min-w-0 flex-1 flex-col pr-[5px]">
          <div className="mb-[3px] flex flex-1">
            <div className="flex w-[19px] shrink-0 flex-col">
              <IconColumn icons={sideA} height="h-[222px]" width="w-[16px] border-l-0" />
              <div className="pt-0.5"><IconColumn icons={sideDraw} height="h-[259px]" width="w-[16px] border-l-0" flat /></div>
            </div>
            <IconColumn icons={sideB} height="h-[333px]" width="w-[21px]" />
            <IconColumn icons={sideC} height="h-[370px]" width="w-[22px]" />
            <IconColumn icons={sideD} height="h-[204px]" width="w-[22px]" />
            <IconColumn icons={sideE} height="h-[148px]" width="w-[22px]" />
            <Canvas />
            <div className="flex w-[21px] shrink-0 flex-col bg-[#434c58]">
              <IconColumn icons={sideF} height="h-[333px]" width="w-[21px]" />
              <IconColumn icons={sideModify} height="h-[150px]" width="w-[21px]" flat />
            </div>
            <IconColumn icons={sideG} height="h-[352px]" width="w-[22px]" />
          </div>
          <CommandLine />
        </div>
        <Properties />
        <div className="w-[5px] shrink-0 bg-[#2c3139]" />
        <Calculator />
      </main>
      <StatusBar />
      <AliasDialog />
      <svg className="pointer-events-none absolute top-0 left-0 h-[300px] w-[450px]" fill="#e81520" stroke="#e81520" aria-hidden="true">
        <path d="M431 123L285 43M170 194l84 84" fill="none" strokeWidth="1.600" />
        <path d="M278 39l13 1.500-5 8.500zM260 284l-5-13-8 8z" stroke="none" />
      </svg>
    </div>
  );
}
